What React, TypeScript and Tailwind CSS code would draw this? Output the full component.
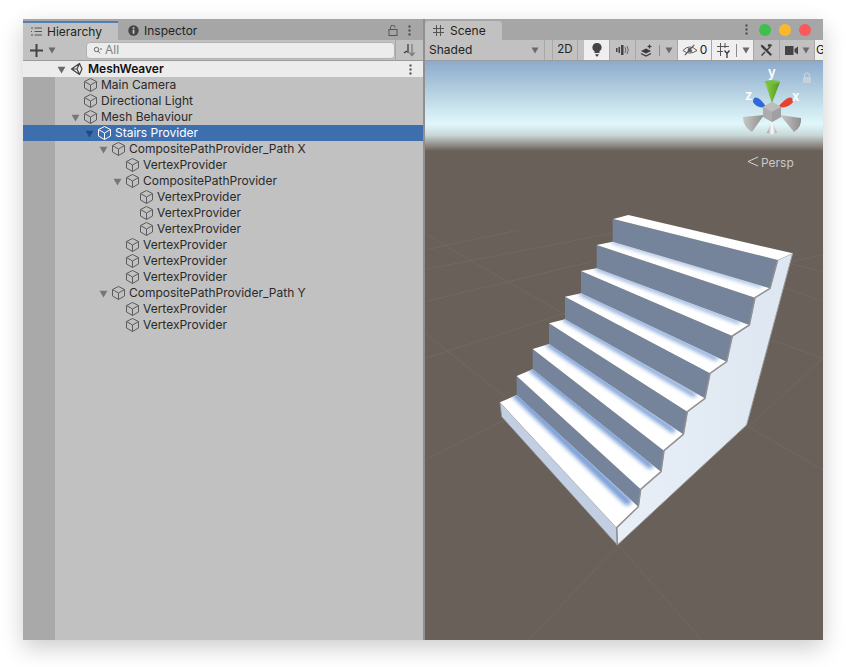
import React from "react";

type Row = { name: string; depth: number; open?: boolean; selected?: boolean };

const rows: Row[] = [
  { name: "Main Camera", depth: 1 },
  { name: "Directional Light", depth: 1 },
  { name: "Mesh Behaviour", depth: 1, open: true },
  { name: "Stairs Provider", depth: 2, open: true, selected: true },
  { name: "CompositePathProvider_Path X", depth: 3, open: true },
  { name: "VertexProvider", depth: 4 },
  { name: "CompositePathProvider", depth: 4, open: true },
  { name: "VertexProvider", depth: 5 },
  { name: "VertexProvider", depth: 5 },
  { name: "VertexProvider", depth: 5 },
  { name: "VertexProvider", depth: 4 },
  { name: "VertexProvider", depth: 4 },
  { name: "VertexProvider", depth: 4 },
  { name: "CompositePathProvider_Path Y", depth: 3, open: true },
  { name: "VertexProvider", depth: 4 },
  { name: "VertexProvider", depth: 4 },
];

// stair outline, measured at 3x with origin at (480,200)
const treads = [
  "400,57 445,45 938,160 893,180",
  "350,135 398,125 870,265 825,293",
  "303,213 350,205 808,375 757,408",
  "255,290 303,280 740,485 690,520",
  "207,370 255,358 675,595 622,635",
  "158,447 207,432 610,703 552,752",
  "110,528 158,508 543,815 482,868",
  "60,607 110,585 475,920 410,983",
];
const risers = [
  "398,57 893,180 870,265 398,125",
  "350,135 825,293 808,375 350,205",
  "303,213 757,408 740,485 303,283",
  "255,290 690,520 675,595 255,358",
  "207,370 622,635 610,703 207,432",
  "158,447 552,752 543,815 158,508",
  "110,528 482,868 475,920 110,585",
];
const feet = [
  { x1: 398, y1: 125, x2: 842, y2: 258, w: 8 },
  { x1: 350, y1: 205, x2: 775, y2: 366, w: 10 },
  { x1: 303, y1: 281, x2: 708, y2: 476, w: 12 },
  { x1: 255, y1: 358, x2: 642, y2: 584, w: 14 },
  { x1: 207, y1: 433, x2: 578, y2: 690, w: 17 },
  { x1: 158, y1: 509, x2: 510, y2: 796, w: 20 },
  { x1: 110, y1: 586, x2: 442, y2: 904, w: 24 },
];
const side =
  "938,160 893,180 870,265 825,293 808,375 757,408 740,485 690,520 675,595 622,635 610,703 552,752 543,815 482,868 475,920 410,983 412,1035 800,675";

// ground grid, measured at 3x with origin at (425,230)
const gridLines = [
  [0, 118, 560, 10], [0, 215, 500, 95], [0, 385, 420, 250], [0, 690, 240, 570],
  [0, 10, 130, 88], [130, 88, 440, 265], [0, 310, 240, 500], [580, 945, 310, 1230],
  [580, 945, 830, 1230], [970, 590, 1194, 720], [970, 590, 1194, 385], [1040, 330, 1194, 385],
  [1100, 95, 1194, 75], [1090, 100, 1194, 125], [1070, 170, 1194, 215], [0, 60, 280, 0],
];

function Cube({ color = "#5c5c5c" }: { color?: string }) {
  return (
    <svg width="15" height="16" viewBox="0 0 15 16" fill="none" stroke={color} strokeWidth="1" className="shrink-0">
      <path d="M7.5 1.5 13.5 4.5V11L7.5 14.5 1.5 11V4.5Z" strokeLinejoin="round" />
      <path d="M1.8 4.7 7.5 8l5.7-3.3M7.5 8v6.3" />
    </svg>
  );
}

function Caret({ color = "#6a6a6a", size = 8 }: { color?: string; size?: number }) {
  return (
    <svg width={size} height={size} viewBox="0 0 8 8" className="shrink-0">
      <path d="M.5 1.5h7L4 7.5Z" fill={color} />
    </svg>
  );
}

function Kebab({ color = "#444" }: { color?: string }) {
  return (
    <svg width="3" height="11" viewBox="0 0 3 11" className="shrink-0">
      <rect x=".5" y=".5" width="2" height="2" fill={color} />
      <rect x=".5" y="4.5" width="2" height="2" fill={color} />
      <rect x=".5" y="8.5" width="2" height="2" fill={color} />
    </svg>
  );
}

function TreeRow({ row }: { row: Row }) {
  return (
    <div className={`flex h-4 ${row.selected ? "bg-[#3d6fae] text-white" : "text-[#2a2a2a]"}`}>
      <div className={`w-8 shrink-0 ${row.selected ? "" : "bg-[#a9a9a9]"}`} />
      <div className="flex items-center" style={{ paddingLeft: (row.depth - 1) * 14 + 28 }}>
        <div className="relative flex items-center">
          {row.open && (
            <span className="absolute left-[-12px] top-[4px]">
              <Caret color={row.selected ? "#234a78" : "#777777"} size={9} />
            </span>
          )}
          <Cube color={row.selected ? "#ffffff" : "#5c5c5c"} />
        </div>
        <span className="ml-[3px] whitespace-nowrap">{row.name}</span>
      </div>
    </div>
  );
}

function Hierarchy() {
  return (
    <div className="flex h-full w-[400px] shrink-0 flex-col">
      <div className="flex h-[21px] items-end bg-[#a6a6a6]">
        <div className="flex h-[19px] w-[95px] items-center gap-[5px] border-t-2 border-[#4f7fb3] bg-[#c1c1c1] pl-2 text-[#222]">
          <svg width="11" height="9" viewBox="0 0 11 9" fill="none" stroke="#555" strokeWidth="1">
            <path d="M0 1h2M0 4.500h1M0 8h2M3.500 1H11M3.500 4.500H11M3.500 8H11" />
          </svg>
          Hierarchy
        </div>
        <div className="flex h-[19px] items-center gap-[5px] pl-[10px] text-[#222]">
          <svg width="11" height="11" viewBox="0 0 11 11">
            <circle cx="5.500" cy="5.500" r="5.200" fill="#444" />
            <rect x="4.700" y="4.700" width="1.700" height="4" fill="#ccc" />
            <rect x="4.700" y="2.200" width="1.700" height="1.600" fill="#ccc" />
          </svg>
          Inspector
        </div>
        <div className="ml-auto flex h-[19px] items-center gap-[10px] pr-[12px]">
          <svg width="10" height="11" viewBox="0 0 10 11" fill="none" stroke="#555" strokeWidth="1">
            <path d="M2.500 4V2.500a2.300 2.300 0 0 1 4.600 0" />
            <rect x="1" y="4.500" width="8" height="6" />
          </svg>
          <Kebab />
        </div>
      </div>
      <div className="flex h-[21px] items-center border-b border-[#9b9b9b] bg-[#c1c1c1]">
        <svg width="13" height="13" viewBox="0 0 13 13" className="ml-[7px]">
          <path d="M0 6.500h13M6.500 0v13" stroke="#444" strokeWidth="2" />
        </svg>
        <span className="ml-[5px]">
          <Caret />
        </span>
        <div className="ml-[30px] flex h-[17px] w-[309px] items-center rounded-[4px] border border-[#b3b3b3] bg-[#ececec] pl-[6px] text-[#7f7f7f]">
          <svg width="9" height="9" viewBox="0 0 9 9" fill="none" stroke="#666" strokeWidth="1" className="mr-[3px]">
            <circle cx="3.500" cy="3.500" r="2.200" />
            <path d="M5 5l2 2.500M7 3h2" />
          </svg>
          All
        </div>
        <div className="ml-auto flex h-[20px] w-[28px] items-center justify-center border-l border-[#a8a8a8]">
          <svg width="14" height="14" viewBox="0 0 14 14" fill="none" strokeWidth="1.200">
            <path d="M1 10l3-2M5 1v9" stroke="#333" />
            <path d="M9 1v11M6.500 9.500 9 12.500l2.500-3" stroke="#777" />
          </svg>
        </div>
      </div>
      <div className="flex min-h-0 flex-1 flex-col">
        <div className="flex h-4 items-center bg-[#ececec] font-semibold text-[#111]">
          <div className="relative h-4 w-8 shrink-0">
            <span className="absolute left-[34px] top-[4px]">
              <Caret size={9} />
            </span>
            <svg width="14" height="14" viewBox="0 0 14 14" fill="none" stroke="#444" strokeWidth="1.200" className="absolute left-[47px] top-[1px]">
              <path d="M1.500 7 9.500 1.500l2.500 5.500-2.500 5.500Z M1.500 7H7l2.500-5.500M7 7l2.500 5.500" strokeLinejoin="round" />
            </svg>
          </div>
          <span className="ml-[33px]">MeshWeaver</span>
          <span className="ml-auto mr-[11px]">
            <Kebab />
          </span>
        </div>
        {rows.map((row, i) => (
          <TreeRow key={i} row={row} />
        ))}
        <div className="flex flex-1">
          <div className="w-8 bg-[#a9a9a9]" />
          <div className="flex-1 bg-[#c1c1c1]" />
        </div>
      </div>
    </div>
  );
}

function Seg({ w, on, children }: { w: number; on?: boolean; children?: React.ReactNode }) {
  return (
    <div
      className={`flex h-full shrink-0 items-center justify-center border-r border-[#a8a8a8] ${on ? "bg-[#efefef]" : "bg-[#c1c1c1]"}`}
      style={{ width: w }}
    >
      {children}
    </div>
  );
}

function SceneToolbar() {
  return (
    <div className="flex h-[21px] items-stretch overflow-hidden border-b border-[#9b9b9b] bg-[#c1c1c1] text-[#222]">
      <div className="flex w-[120px] shrink-0 items-center justify-between border-r border-[#a8a8a8] pl-[4px] pr-[5px]">
        Shaded
        <Caret />
      </div>
      <div className="w-[7px] shrink-0" />
      <div className="flex w-[26px] shrink-0 items-center justify-center border-x border-[#a8a8a8] text-[11.5px]">2D</div>
      <div className="w-[6px] shrink-0" />
      <Seg w={26} on>
        <svg width="10" height="14" viewBox="0 0 10 14">
          <path d="M5 0a4.500 4.500 0 0 1 2.500 8.300V10h-5V8.300A4.500 4.500 0 0 1 5 0Z" fill="#444" />
          <path d="M3 11.300h4L5.500 13.500h-1Z" fill="#444" />
        </svg>
      </Seg>
      <Seg w={26}>
        <svg width="14" height="10" viewBox="0 0 14 10" fill="#444">
          <rect x="0" y="3" width="1.500" height="4" />
          <rect x="2.500" y="2" width="1.500" height="6" />
          <rect x="5" y="0" width="2.500" height="10" />
          <path d="M9 2q1.500 3 0 6M11 1q2.500 4 0 8" fill="none" stroke="#666" />
        </svg>
      </Seg>
      <Seg w={42}>
        <svg width="14" height="13" viewBox="0 0 14 13" fill="#3a3a3a">
          <path d="M1 7l5-2.500 5 2.500-5 2.500Z" />
          <path d="M1 9.500l5 2.500 5-2.500" fill="none" stroke="#3a3a3a" strokeWidth="1.300" />
          <path d="M9.500 0l.8 1.700 1.700.8-1.700.8-.8 1.700-.8-1.700-1.700-.8 1.700-.8Z" />
        </svg>
        <span className="mx-[5px] h-[11px] w-px bg-[#8b8b8b]" />
        <Caret />
      </Seg>
      <Seg w={34} on>
        <svg width="16" height="12" viewBox="0 0 17 12" fill="none" stroke="#555" strokeWidth="1">
          <path d="M1 6.500Q8 -1 16 6.500 8 12 1 6.500Z" />
          <path d="M8.500 4a2 2 0 1 0 2 2" fill="#666" />
          <path d="M3 11.500 13 .5" strokeWidth="1.200" />
        </svg>
        <span className="ml-[2px]">0</span>
      </Seg>
      <Seg w={42} on>
        <svg width="14" height="15" viewBox="0 0 14 15" fill="none" stroke="#555" strokeWidth="1" className="ml-[1px]">
          <path d="M0 3.500h12M0 8.500h6M3.500 0v13M8 0v5" />
          <path d="M7.500 7.500l2.500 3 2.500-3M10 10.500v4.500" stroke="#333" strokeWidth="1.300" />
        </svg>
        <span className="mx-[5px] h-[13px] w-px bg-[#8b8b8b]" />
        <Caret />
      </Seg>
      <Seg w={26}>
        <svg width="13" height="13" viewBox="0 0 13 13" stroke="#3a3a3a" fill="none">
          <path d="M1.500 11.500 5 8M7 6l3.500-3.500" strokeWidth="1.400" />
          <path d="M8 .8a2.500 2.500 0 0 1 4 1.200l-1.500-.3-1 1L8 2.200Z" fill="#3a3a3a" strokeWidth=".4" />
          <path d="M1 1 3 1.500 11.800 10.500 10.500 11.800 1.500 3Z" fill="#3a3a3a" strokeWidth=".4" />
        </svg>
      </Seg>
      <Seg w={35}>
        <svg width="13" height="9" viewBox="0 0 13 9" fill="#444" className="mr-[4px]">
          <rect width="8.500" height="9" />
          <path d="M9.500 3 13 .5v8L9.500 6Z" />
        </svg>
        <Caret />
      </Seg>
      <div className="w-[20px] shrink-0 bg-[#efefef] pl-[1px] leading-[20px]">G</div>
    </div>
  );
}

function Gizmo() {
  return (
    <svg className="absolute inset-0" width="398" height="580" viewBox="0 0 398 580">
      <defs>
        <linearGradient id="g-green" x1="0" x2="1" y1="0" y2="0">
          <stop offset="0" stopColor="#8fcf3f" />
          <stop offset="1" stopColor="#4f9a25" />
        </linearGradient>
        <linearGradient id="g-gray" x1="0" x2="1" y1="0" y2="0">
          <stop offset="0" stopColor="#c8c8c8" />
          <stop offset="1" stopColor="#8e8e8e" />
        </linearGradient>
        <linearGradient id="g-white" x1="0" x2="1" y1="0" y2="0">
          <stop offset="0" stopColor="#9a9a9a" />
          <stop offset=".5" stopColor="#ffffff" />
          <stop offset="1" stopColor="#a5a5a5" />
        </linearGradient>
      </defs>
      <g transform="translate(-425 -61)">
        <path d="M765 82 772 103 780 82Z" fill="url(#g-green)" />
        <ellipse cx="772.500" cy="82" rx="7.500" ry="1.800" fill="#74c13a" />
        <path d="M753 102 Q753 96 758 98 Q762 100 766 107 Q757 109 753 102Z" fill="#2f68d8" />
        <path d="M793 102 Q793 96 788 98 Q784 100 778 107 Q788 109 793 102Z" fill="#e8412c" />
        <path d="M743 117 764 115 752 132Q743 127 743 117Z" fill="url(#g-gray)" />
        <path d="M801 118 780 115 794 132Q802 127 801 118Z" fill="url(#g-gray)" />
        <path d="M767 133 772 121 777 133Q772 135 767 133Z" fill="url(#g-white)" />
        <path d="M772 102 781 107 781 117 772 122 763 117 763 107Z" fill="#acacac" />
        <path d="M772 102 781 107 772 112 763 107Z" fill="#bcbcbc" />
        <path d="M772 112 781 107 781 117 772 122Z" fill="#a0a0a0" />
        <rect x="803" y="77" width="8" height="6" rx="1" fill="#c3d2dc" />
        <path d="M804.500 77v-1.500a2.500 2.500 0 0 1 5 0V77" fill="none" stroke="#c3d2dc" strokeWidth="1.200" />
        <path d="M758 157 748 161.500 758 166" fill="none" stroke="#d4d4d4" strokeWidth="1" />
      </g>
    </svg>
  );
}

function Stairs() {
  return (
    <svg className="absolute inset-0" width="398" height="580" viewBox="0 0 398 580">
      <defs>
        <filter id="soft" x="-20%" y="-20%" width="140%" height="140%">
          <feGaussianBlur stdDeviation="6" />
        </filter>
        <linearGradient id="sideFill" x1="0" x2="1" y1="0" y2="0">
          <stop offset="0" stopColor="#e8eff7" />
          <stop offset="1" stopColor="#dde6f1" />
        </linearGradient>
        <clipPath id="tread-clip">
          {treads.map((t, i) => (
            <polygon key={i} points={t} />
          ))}
        </clipPath>
      </defs>
      <g transform="translate(-425 -61)">
        <g stroke="#716862" strokeWidth="1" fill="none">
          {gridLines.map((l, i) => (
            <line key={i} x1={425 + l[0] / 3} y1={230 + l[1] / 3} x2={425 + l[2] / 3} y2={230 + l[3] / 3} />
          ))}
        </g>
        <g transform="translate(480 200) scale(.33333)">
          <polygon points={side} fill="url(#sideFill)" stroke="#9a9a9a" strokeWidth="3" strokeLinejoin="round" />
          {risers.map((r, i) => (
            <polygon key={i} points={r} fill="#75849a" />
          ))}
          <polygon points="60,607 410,983 412,1035 65,650" fill="#c2cfe2" stroke="#8f8f8f" strokeWidth="2" />
          {treads.map((t, i) => (
            <polygon key={i} points={t} fill="#ffffff" />
          ))}
          <g clipPath="url(#tread-clip)">
            {feet.map((f, i) => (
              <line key={i} x1={f.x1} y1={f.y1} x2={f.x2} y2={f.y2} stroke="#7a9fd6" strokeWidth={f.w} filter="url(#soft)" strokeLinecap="round" />
            ))}
          </g>
          <polyline
            points="893,180 870,265 825,293 808,375 757,408 740,485 690,520 675,595 622,635 610,703 552,752 543,815 482,868 475,920 410,983 412,1035"
            fill="none"
            stroke="#929292"
            strokeWidth="4.500"
            strokeLinejoin="round"
          />
        </g>
      </g>
    </svg>
  );
}

function Scene() {
  return (
    <div className="flex h-full min-w-0 flex-1 flex-col">
      <div className="flex h-[21px] items-end bg-[#a6a6a6]">
        <div className="flex h-[19px] w-[77px] items-center gap-[6px] rounded-t-[3px] bg-[#c1c1c1] pl-2 text-[#222]">
          <svg width="11" height="11" viewBox="0 0 11 11" stroke="#555" strokeWidth="1">
            <path d="M0 3.500h11M0 7.500h11M3.500 0v11M7.500 0v11" />
          </svg>
          Scene
        </div>
        <div className="ml-auto flex h-[21px] items-center gap-2 pr-3">
          <span className="mr-[3px]">
            <Kebab />
          </span>
          <span className="h-3 w-3 rounded-full bg-[#3ec04e]" />
          <span className="h-3 w-3 rounded-full bg-[#f9b92d]" />
          <span className="h-3 w-3 rounded-full bg-[#f85a5b]" />
        </div>
      </div>
      <SceneToolbar />
      <div className="relative min-h-0 flex-1 overflow-hidden bg-[linear-gradient(180deg,#8cabcd_0px,#b4cfe0_30px,#e0f8fb_63px,#c9d8d8_74px,#8b8580_85px,#69605a_90px,#69605a_100%)]">
        <Stairs />
        <Gizmo />
        <span className="absolute left-[343px] top-[2px] text-[13px] font-semibold text-white">y</span>
        <span className="absolute left-[320px] top-[25px] text-[13px] font-semibold text-white">z</span>
        <span className="absolute left-[367px] top-[26px] text-[13px] font-semibold text-white">x</span>
        <span className="absolute left-[336px] top-[93px] text-[12px] text-[#c9c9c9]">Persp</span>
      </div>
    </div>
  );
}

export default function App() {
  return (
    <div className="h-[667px] w-[846px] overflow-hidden bg-white pl-[23px] pt-[19px] font-[Inter,sans-serif] text-[12px]">
      <div className="flex h-[621px] w-[800px] bg-[#c1c1c1] shadow-[0_8px_22px_rgba(0,0,0,0.2)]">
        <Hierarchy />
        <div className="w-[2px] shrink-0 bg-[#8f8f8f]" />
        <Scene />
      </div>
    </div>
  );
}
